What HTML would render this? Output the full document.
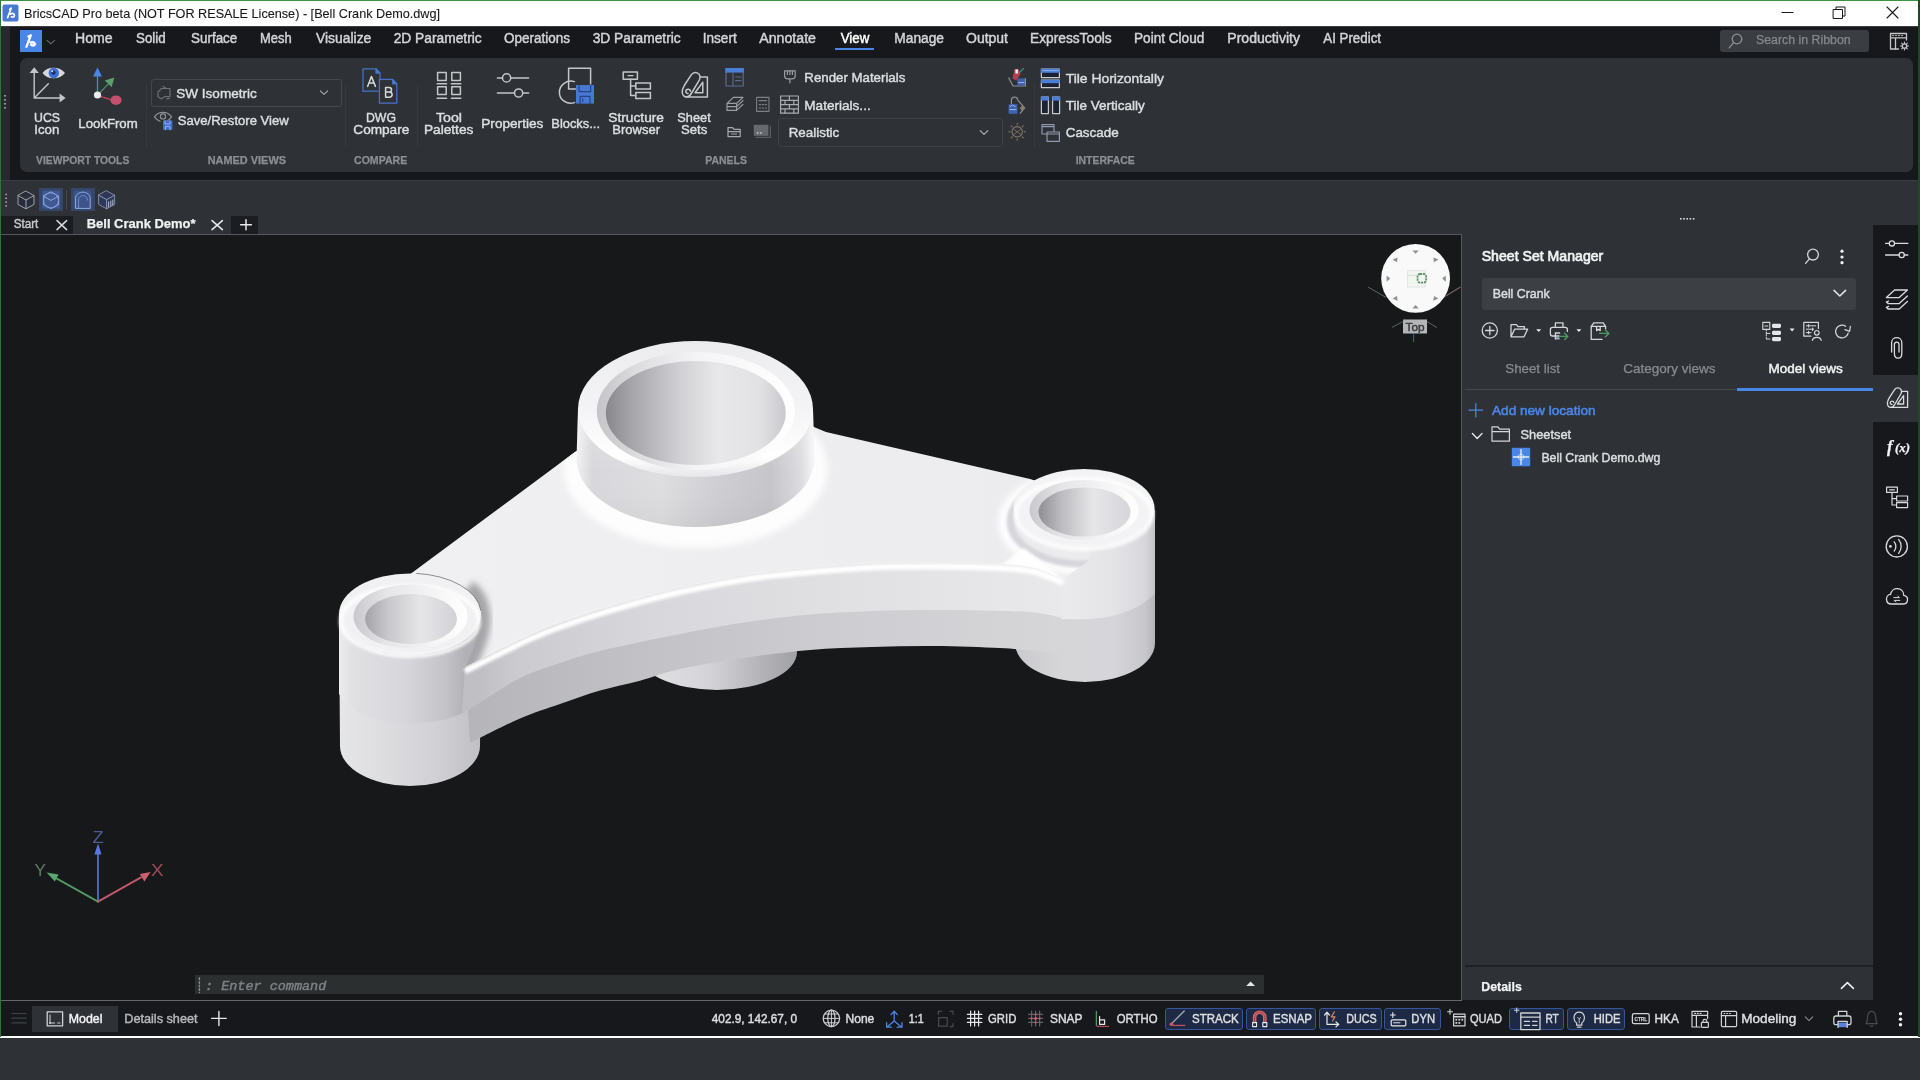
<!DOCTYPE html>
<html lang="en"><head><meta charset="utf-8"><title>BricsCAD Pro beta - Bell Crank Demo.dwg</title>
<style>
html,body{margin:0;padding:0;}
body{width:1920px;height:1080px;overflow:hidden;background:#2d3135;position:relative;font-family:"Liberation Sans", sans-serif;}
.b{position:absolute;}
svg#ov{position:absolute;left:0;top:0;width:1920px;height:1080px;font-family:"Liberation Sans", sans-serif;will-change:transform;}
svg#ov text{white-space:pre;}

</style></head><body>
<div class="b" style="left:0px;top:0px;width:1920px;height:1080px;background:#2e3236;"></div>
<div class="b" style="left:0px;top:0px;width:1920px;height:1px;background:#3f8f43;"></div>
<div class="b" style="left:1px;top:1px;width:1918px;height:25px;background:#ffffff;"></div>
<div class="b" style="left:0px;top:26px;width:1920px;height:154px;background:#17181b;"></div>
<div class="b" style="left:1px;top:26px;width:9px;height:154px;background:#26292d;"></div>
<div class="b" style="left:0px;top:26px;width:1920px;height:1px;background:#3b3e42;"></div>
<div class="b" style="left:20px;top:58px;width:1893px;height:114px;background:#2e3236;border-radius:7px;"></div>
<div class="b" style="left:0px;top:180px;width:1920px;height:1px;background:#3a3e42;"></div>
<div class="b" style="left:20px;top:30px;width:22px;height:22px;background:#4a86e8;"></div>
<div class="b" style="left:1720px;top:30px;width:149px;height:22px;background:#3a3e43;border-radius:3px;"></div>
<div class="b" style="left:1px;top:216px;width:72px;height:18px;background:#1b1d20;"></div>
<div class="b" style="left:231px;top:216px;width:27px;height:18px;background:#1b1d20;"></div>
<div class="b" style="left:0px;top:234px;width:1462px;height:767px;background:#54575b;"></div>
<div class="b" style="left:1px;top:235px;width:1460px;height:765px;background:#17181a;"></div>
<div class="b" style="left:1873px;top:225px;width:45px;height:776px;background:#17181b;"></div>
<div class="b" style="left:1873px;top:375px;width:45px;height:47px;background:#2e3236;"></div>
<div class="b" style="left:1465px;top:965px;width:408px;height:2px;background:#1f2124;"></div>
<div class="b" style="left:0px;top:1000px;width:1920px;height:37px;background:#17181b;"></div>
<div class="b" style="left:0px;top:1000px;width:1462px;height:1px;background:#63666a;"></div>
<div class="b" style="left:0px;top:1036px;width:1920px;height:2px;background:#ffffff;"></div>
<div class="b" style="left:0px;top:1038px;width:1920px;height:42px;background:#2e3236;"></div>
<div class="b" style="left:32px;top:1006px;width:86px;height:26px;background:#2e3236;"></div>
<div class="b" style="left:195px;top:975px;width:1069px;height:19px;background:#2b2f30;"></div>
<div class="b" style="left:0px;top:0px;width:1px;height:1037px;background:#2e7432;"></div>
<div class="b" style="left:1918px;top:0px;width:2px;height:1037px;background:#1d4a21;"></div>
<div class="b" style="left:1482px;top:278px;width:374px;height:32px;background:#3c4045;border-radius:3px;"></div>
<div class="b" style="left:1465px;top:389px;width:408px;height:1px;background:#45484d;"></div>
<div class="b" style="left:1737px;top:388px;width:136px;height:3px;background:#4a86e8;"></div>
<div class="b" style="left:151px;top:79px;width:189px;height:26px;border:1px solid #45494e;border-radius:3px;"></div>
<div class="b" style="left:778px;top:118px;width:223px;height:27px;border:1px solid #3d4146;border-radius:3px;"></div>
<div class="b" style="left:835px;top:48px;width:39px;height:2px;background:#4a86e8;"></div>
<div class="b" style="left:1165px;top:1008px;width:76px;height:20px;background:#1e2a45;border:1px solid #35569a;border-radius:3px;"></div>
<div class="b" style="left:1246px;top:1008px;width:68px;height:20px;background:#1e2a45;border:1px solid #35569a;border-radius:3px;"></div>
<div class="b" style="left:1319px;top:1008px;width:61px;height:20px;background:#1e2a45;border:1px solid #35569a;border-radius:3px;"></div>
<div class="b" style="left:1384px;top:1008px;width:55px;height:20px;background:#1e2a45;border:1px solid #35569a;border-radius:3px;"></div>
<div class="b" style="left:1509px;top:1008px;width:53px;height:20px;background:#1e2a45;border:1px solid #35569a;border-radius:3px;"></div>
<div class="b" style="left:1567px;top:1008px;width:56px;height:20px;background:#1e2a45;border:1px solid #35569a;border-radius:3px;"></div>
<div class="b" style="left:39px;top:188px;width:24px;height:23px;background:#36466a;"></div>
<div class="b" style="left:71px;top:188px;width:24px;height:23px;background:#36466a;"></div>
<div class="b" style="left:66px;top:190px;width:1px;height:19px;background:#45494e;"></div>
<div class="b" style="left:146px;top:84px;width:1px;height:63px;background:#363a3f;"></div>
<div class="b" style="left:345px;top:84px;width:1px;height:63px;background:#363a3f;"></div>
<div class="b" style="left:417px;top:84px;width:1px;height:63px;background:#363a3f;"></div>
<div class="b" style="left:1034px;top:84px;width:1px;height:63px;background:#363a3f;"></div>
<svg id="ov" viewBox="0 0 1920 1080" width="1920" height="1080">
<defs>
<linearGradient id="gBody" x1="578" x2="813" y1="0" y2="0" gradientUnits="userSpaceOnUse">
 <stop offset="0" stop-color="#efeff1"/><stop offset=".06" stop-color="#d8d8dc"/><stop offset=".35" stop-color="#dedee1"/>
 <stop offset=".6" stop-color="#cfcfd3"/><stop offset=".82" stop-color="#c6c6ca"/><stop offset=".95" stop-color="#dcdce0"/><stop offset="1" stop-color="#f4f4f6"/>
</linearGradient>
<linearGradient id="gBodyV" x1="0" x2="0" y1="409" y2="535" gradientUnits="userSpaceOnUse">
 <stop offset="0" stop-color="#fff" stop-opacity=".25"/><stop offset=".5" stop-color="#fff" stop-opacity="0"/><stop offset="1" stop-color="#000" stop-opacity=".06"/>
</linearGradient>
<linearGradient id="gHoleB" x1="606" x2="786" y1="0" y2="0" gradientUnits="userSpaceOnUse">
 <stop offset="0" stop-color="#88888c"/><stop offset=".12" stop-color="#a2a2a6"/><stop offset=".4" stop-color="#cfcfd3"/>
 <stop offset=".62" stop-color="#e8e8ea"/><stop offset=".85" stop-color="#e2e2e5"/><stop offset="1" stop-color="#c9c9cd"/>
</linearGradient>
<linearGradient id="gChamB" x1="596" x2="795" y1="0" y2="0" gradientUnits="userSpaceOnUse">
 <stop offset="0" stop-color="#c4c4c8"/><stop offset=".2" stop-color="#dcdcdf"/><stop offset=".5" stop-color="#f4f4f6"/><stop offset="1" stop-color="#ffffff"/>
</linearGradient>
<linearGradient id="gRimB" x1="0" x2="0" y1="341" y2="477" gradientUnits="userSpaceOnUse">
 <stop offset="0" stop-color="#ececee"/><stop offset=".5" stop-color="#f4f4f6"/><stop offset=".85" stop-color="#ffffff"/><stop offset="1" stop-color="#e6e6e9"/>
</linearGradient>
<linearGradient id="gTop" x1="420" x2="1060" y1="0" y2="0" gradientUnits="userSpaceOnUse">
 <stop offset="0" stop-color="#f0f0f2"/><stop offset=".5" stop-color="#eeeef0"/><stop offset="1" stop-color="#ececee"/>
</linearGradient>
<linearGradient id="gFaceU" x1="480" x2="1060" y1="0" y2="0" gradientUnits="userSpaceOnUse"><stop offset="0" stop-color="#c0c0c4"/><stop offset=".06" stop-color="#cbcbcf"/><stop offset=".3" stop-color="#d8d8dc"/><stop offset=".6" stop-color="#e0e0e3"/><stop offset="1" stop-color="#e9e9eb"/></linearGradient>
<linearGradient id="gFaceL" x1="480" x2="1060" y1="0" y2="0" gradientUnits="userSpaceOnUse"><stop offset="0" stop-color="#b6b6ba"/><stop offset=".3" stop-color="#c3c3c7"/><stop offset=".6" stop-color="#cdcdd1"/><stop offset="1" stop-color="#d6d6d9"/></linearGradient>
<linearGradient id="gLU" x1="339" x2="481" y1="0" y2="0" gradientUnits="userSpaceOnUse">
 <stop offset="0" stop-color="#ececee"/><stop offset=".1" stop-color="#e0e0e3"/><stop offset=".45" stop-color="#d8d8dc"/><stop offset=".75" stop-color="#c4c4c8"/><stop offset=".89" stop-color="#b2b2b6"/><stop offset="1" stop-color="#b0b0b4"/>
</linearGradient>
<linearGradient id="gLL" x1="339" x2="481" y1="0" y2="0" gradientUnits="userSpaceOnUse">
 <stop offset="0" stop-color="#e6e6e8"/><stop offset=".3" stop-color="#dedee1"/><stop offset=".7" stop-color="#d0d0d4"/><stop offset="1" stop-color="#c0c0c4"/>
</linearGradient>
<linearGradient id="gRU" x1="1014" x2="1155" y1="0" y2="0" gradientUnits="userSpaceOnUse">
 <stop offset="0" stop-color="#e8e8ea"/><stop offset=".35" stop-color="#ebebed"/><stop offset=".7" stop-color="#e4e4e7"/><stop offset=".93" stop-color="#d8d8dc"/><stop offset="1" stop-color="#c4c4c8"/>
</linearGradient>
<linearGradient id="gRL" x1="1014" x2="1155" y1="0" y2="0" gradientUnits="userSpaceOnUse">
 <stop offset="0" stop-color="#cacace"/><stop offset=".35" stop-color="#d6d6d9"/><stop offset=".7" stop-color="#d6d6da"/><stop offset=".93" stop-color="#c8c8cc"/><stop offset="1" stop-color="#b4b4b8"/>
</linearGradient>
<linearGradient id="gHoleL" x1="365" x2="457" y1="0" y2="0" gradientUnits="userSpaceOnUse">
 <stop offset="0" stop-color="#a4a4a8"/><stop offset=".25" stop-color="#c8c8cc"/><stop offset=".6" stop-color="#e6e6e9"/><stop offset="1" stop-color="#d2d2d6"/>
</linearGradient>
<linearGradient id="gHoleR" x1="1038" x2="1130" y1="0" y2="0" gradientUnits="userSpaceOnUse">
 <stop offset="0" stop-color="#8e8e92"/><stop offset=".25" stop-color="#bcbcc0"/><stop offset=".6" stop-color="#e6e6e9"/><stop offset="1" stop-color="#d6d6da"/>
</linearGradient>
<linearGradient id="gChamS" x1="0" x2="1" y1="0" y2="0">
 <stop offset="0" stop-color="#c9c9cd"/><stop offset=".3" stop-color="#e6e6e9"/><stop offset="1" stop-color="#ffffff"/>
</linearGradient>
<linearGradient id="gUnderB" x1="637" x2="800" y1="0" y2="0" gradientUnits="userSpaceOnUse">
 <stop offset="0" stop-color="#e2e2e5"/><stop offset=".45" stop-color="#d4d4d8"/><stop offset=".8" stop-color="#b0b0b4"/><stop offset="1" stop-color="#a0a0a4"/>
</linearGradient>
<filter id="soft" x="-30%" y="-30%" width="160%" height="160%"><feGaussianBlur stdDeviation="1.6"/></filter>
<filter id="soft3" x="-60%" y="-30%" width="220%" height="160%"><feGaussianBlur stdDeviation="3"/></filter>
<clipPath id="cpTop"><path d="M405,578 L575,452 L700,380 L826,432 L1030,479 L1090,500 L1090,560 L1063,579 C1058.3,577.2 1045.5,570.5 1035.0,568.0 C1024.5,565.5 1016.7,564.9 1000.0,564.0 C983.3,563.1 956.3,562.6 935.0,562.5 C913.7,562.4 892.8,562.6 872.0,563.5 C851.2,564.4 830.8,566.1 810.0,568.0 C789.2,569.9 768.7,571.7 747.0,575.0 C725.3,578.3 697.8,584.2 680.0,588.0 C662.2,591.8 653.3,594.4 640.0,598.0 C626.7,601.6 613.3,605.4 600.0,609.6 C586.7,613.8 571.7,618.8 560.0,623.0 C548.3,627.2 539.2,631.0 530.0,635.0 C520.8,639.0 513.2,643.0 505.0,647.0 C496.8,651.0 487.7,655.7 481.0,659.0 C474.3,662.3 467.7,665.7 465.0,667.0 L478,632 L480,615 L400,600 Z"/></clipPath>

</defs>
<text x="24.0" y="18.3" font-size="13" fill="#1a1a1a" textLength="416.0" lengthAdjust="spacingAndGlyphs" stroke="#1a1a1a" stroke-width="0.12">BricsCAD Pro beta (NOT FOR RESALE License) - [Bell Crank Demo.dwg]</text>
<text x="75.0" y="42.8" font-size="14" fill="#d2d4d6" textLength="37.6" lengthAdjust="spacingAndGlyphs" stroke="#d2d4d6" stroke-width="0.45">Home</text>
<text x="136.0" y="42.8" font-size="14" fill="#d2d4d6" textLength="29.7" lengthAdjust="spacingAndGlyphs" stroke="#d2d4d6" stroke-width="0.45">Solid</text>
<text x="191.0" y="42.8" font-size="14" fill="#d2d4d6" textLength="46.3" lengthAdjust="spacingAndGlyphs" stroke="#d2d4d6" stroke-width="0.45">Surface</text>
<text x="260.0" y="42.8" font-size="14" fill="#d2d4d6" textLength="31.7" lengthAdjust="spacingAndGlyphs" stroke="#d2d4d6" stroke-width="0.45">Mesh</text>
<text x="316.0" y="42.8" font-size="14" fill="#d2d4d6" textLength="55.3" lengthAdjust="spacingAndGlyphs" stroke="#d2d4d6" stroke-width="0.45">Visualize</text>
<text x="393.7" y="42.8" font-size="14" fill="#d2d4d6" textLength="88.0" lengthAdjust="spacingAndGlyphs" stroke="#d2d4d6" stroke-width="0.45">2D Parametric</text>
<text x="504.0" y="42.8" font-size="14" fill="#d2d4d6" textLength="66.0" lengthAdjust="spacingAndGlyphs" stroke="#d2d4d6" stroke-width="0.45">Operations</text>
<text x="592.7" y="42.8" font-size="14" fill="#d2d4d6" textLength="88.0" lengthAdjust="spacingAndGlyphs" stroke="#d2d4d6" stroke-width="0.45">3D Parametric</text>
<text x="702.7" y="42.8" font-size="14" fill="#d2d4d6" textLength="34.0" lengthAdjust="spacingAndGlyphs" stroke="#d2d4d6" stroke-width="0.45">Insert</text>
<text x="759.3" y="42.8" font-size="14" fill="#d2d4d6" textLength="56.7" lengthAdjust="spacingAndGlyphs" stroke="#d2d4d6" stroke-width="0.45">Annotate</text>
<text x="840.7" y="42.8" font-size="14" fill="#ffffff" textLength="28.6" lengthAdjust="spacingAndGlyphs" stroke="#ffffff" stroke-width="0.45">View</text>
<text x="894.3" y="42.8" font-size="14" fill="#d2d4d6" textLength="49.7" lengthAdjust="spacingAndGlyphs" stroke="#d2d4d6" stroke-width="0.45">Manage</text>
<text x="966.0" y="42.8" font-size="14" fill="#d2d4d6" textLength="42.0" lengthAdjust="spacingAndGlyphs" stroke="#d2d4d6" stroke-width="0.45">Output</text>
<text x="1030.0" y="42.8" font-size="14" fill="#d2d4d6" textLength="81.7" lengthAdjust="spacingAndGlyphs" stroke="#d2d4d6" stroke-width="0.45">ExpressTools</text>
<text x="1134.0" y="42.8" font-size="14" fill="#d2d4d6" textLength="70.3" lengthAdjust="spacingAndGlyphs" stroke="#d2d4d6" stroke-width="0.45">Point Cloud</text>
<text x="1227.3" y="42.8" font-size="14" fill="#d2d4d6" textLength="72.7" lengthAdjust="spacingAndGlyphs" stroke="#d2d4d6" stroke-width="0.45">Productivity</text>
<text x="1323.3" y="42.8" font-size="14" fill="#d2d4d6" textLength="57.7" lengthAdjust="spacingAndGlyphs" stroke="#d2d4d6" stroke-width="0.45">AI Predict</text>
<text x="1756.0" y="43.5" font-size="12.5" fill="#85898d" textLength="94.7" lengthAdjust="spacingAndGlyphs" stroke="#85898d" stroke-width="0.25">Search in Ribbon</text>
<text x="34.0" y="122.0" font-size="13.5" fill="#dcdee0" textLength="26.0" lengthAdjust="spacingAndGlyphs" stroke="#dcdee0" stroke-width="0.45">UCS</text>
<text x="34.3" y="134.3" font-size="13.5" fill="#dcdee0" textLength="25.0" lengthAdjust="spacingAndGlyphs" stroke="#dcdee0" stroke-width="0.45">Icon</text>
<text x="78.3" y="128.3" font-size="13.5" fill="#dcdee0" textLength="59.4" lengthAdjust="spacingAndGlyphs" stroke="#dcdee0" stroke-width="0.45">LookFrom</text>
<text x="176.3" y="97.7" font-size="13.5" fill="#dcdee0" textLength="80.4" lengthAdjust="spacingAndGlyphs" stroke="#dcdee0" stroke-width="0.45">SW Isometric</text>
<text x="177.7" y="125.0" font-size="13.5" fill="#dcdee0" textLength="111.0" lengthAdjust="spacingAndGlyphs" stroke="#dcdee0" stroke-width="0.45">Save/Restore View</text>
<text x="366.0" y="122.0" font-size="13.5" fill="#dcdee0" textLength="30.0" lengthAdjust="spacingAndGlyphs" stroke="#dcdee0" stroke-width="0.45">DWG</text>
<text x="353.3" y="134.3" font-size="13.5" fill="#dcdee0" textLength="56.0" lengthAdjust="spacingAndGlyphs" stroke="#dcdee0" stroke-width="0.45">Compare</text>
<text x="436.0" y="122.0" font-size="13.5" fill="#dcdee0" textLength="26.0" lengthAdjust="spacingAndGlyphs" stroke="#dcdee0" stroke-width="0.45">Tool</text>
<text x="424.0" y="134.3" font-size="13.5" fill="#dcdee0" textLength="49.3" lengthAdjust="spacingAndGlyphs" stroke="#dcdee0" stroke-width="0.45">Palettes</text>
<text x="481.3" y="128.3" font-size="13.5" fill="#dcdee0" textLength="62.0" lengthAdjust="spacingAndGlyphs" stroke="#dcdee0" stroke-width="0.45">Properties</text>
<text x="551.3" y="128.3" font-size="13.5" fill="#dcdee0" textLength="48.7" lengthAdjust="spacingAndGlyphs" stroke="#dcdee0" stroke-width="0.45">Blocks...</text>
<text x="608.3" y="122.0" font-size="13.5" fill="#dcdee0" textLength="55.7" lengthAdjust="spacingAndGlyphs" stroke="#dcdee0" stroke-width="0.45">Structure</text>
<text x="612.3" y="134.3" font-size="13.5" fill="#dcdee0" textLength="47.7" lengthAdjust="spacingAndGlyphs" stroke="#dcdee0" stroke-width="0.45">Browser</text>
<text x="677.3" y="122.0" font-size="13.5" fill="#dcdee0" textLength="33.4" lengthAdjust="spacingAndGlyphs" stroke="#dcdee0" stroke-width="0.45">Sheet</text>
<text x="681.0" y="134.3" font-size="13.5" fill="#dcdee0" textLength="26.3" lengthAdjust="spacingAndGlyphs" stroke="#dcdee0" stroke-width="0.45">Sets</text>
<text x="804.3" y="82.3" font-size="13.5" fill="#dcdee0" textLength="101.0" lengthAdjust="spacingAndGlyphs" stroke="#dcdee0" stroke-width="0.45">Render Materials</text>
<text x="804.3" y="109.7" font-size="13.5" fill="#dcdee0" textLength="66.4" lengthAdjust="spacingAndGlyphs" stroke="#dcdee0" stroke-width="0.45">Materials...</text>
<text x="788.7" y="136.7" font-size="13.5" fill="#dcdee0" textLength="50.6" lengthAdjust="spacingAndGlyphs" stroke="#dcdee0" stroke-width="0.45">Realistic</text>
<text x="1065.7" y="83.3" font-size="13.5" fill="#dcdee0" textLength="98.3" lengthAdjust="spacingAndGlyphs" stroke="#dcdee0" stroke-width="0.45">Tile Horizontally</text>
<text x="1065.7" y="110.0" font-size="13.5" fill="#dcdee0" textLength="79.0" lengthAdjust="spacingAndGlyphs" stroke="#dcdee0" stroke-width="0.45">Tile Vertically</text>
<text x="1065.7" y="137.0" font-size="13.5" fill="#dcdee0" textLength="53.0" lengthAdjust="spacingAndGlyphs" stroke="#dcdee0" stroke-width="0.45">Cascade</text>
<text x="36.0" y="164.2" font-size="11" fill="#8b8f93" textLength="93.3" lengthAdjust="spacingAndGlyphs" font-weight="700" stroke="#8b8f93" stroke-width="0.25">VIEWPORT TOOLS</text>
<text x="207.7" y="164.2" font-size="11" fill="#8b8f93" textLength="78.3" lengthAdjust="spacingAndGlyphs" font-weight="700" stroke="#8b8f93" stroke-width="0.25">NAMED VIEWS</text>
<text x="354.0" y="164.2" font-size="11" fill="#8b8f93" textLength="53.3" lengthAdjust="spacingAndGlyphs" font-weight="700" stroke="#8b8f93" stroke-width="0.25">COMPARE</text>
<text x="705.3" y="164.2" font-size="11" fill="#8b8f93" textLength="41.7" lengthAdjust="spacingAndGlyphs" font-weight="700" stroke="#8b8f93" stroke-width="0.25">PANELS</text>
<text x="1075.7" y="164.2" font-size="11" fill="#8b8f93" textLength="59.0" lengthAdjust="spacingAndGlyphs" font-weight="700" stroke="#8b8f93" stroke-width="0.25">INTERFACE</text>
<text x="13.7" y="228.4" font-size="13" fill="#c8cacc" textLength="24.6" lengthAdjust="spacingAndGlyphs" stroke="#c8cacc" stroke-width="0.45">Start</text>
<text x="86.7" y="228.4" font-size="13" fill="#f0f1f2" textLength="108.9" lengthAdjust="spacingAndGlyphs" font-weight="700" stroke="#f0f1f2" stroke-width="0.25">Bell Crank Demo*</text>
<text x="1481.7" y="261.2" font-size="15" fill="#f2f3f4" textLength="121.6" lengthAdjust="spacingAndGlyphs" stroke="#f2f3f4" stroke-width="0.7">Sheet Set Manager</text>
<text x="1492.8" y="298.4" font-size="13" fill="#dcdee0" textLength="56.9" lengthAdjust="spacingAndGlyphs" stroke="#dcdee0" stroke-width="0.45">Bell Crank</text>
<text x="1505.3" y="372.6" font-size="13" fill="#888c90" textLength="54.7" lengthAdjust="spacingAndGlyphs" stroke="#888c90" stroke-width="0.25">Sheet list</text>
<text x="1623.3" y="372.6" font-size="13" fill="#888c90" textLength="92.3" lengthAdjust="spacingAndGlyphs" stroke="#888c90" stroke-width="0.25">Category views</text>
<text x="1768.6" y="372.6" font-size="13" fill="#f2f3f4" textLength="74.2" lengthAdjust="spacingAndGlyphs" stroke="#f2f3f4" stroke-width="0.45">Model views</text>
<text x="1492.0" y="415.2" font-size="13" fill="#4a86e8" textLength="103.6" lengthAdjust="spacingAndGlyphs" stroke="#4a86e8" stroke-width="0.55">Add new location</text>
<text x="1520.6" y="438.8" font-size="13" fill="#dcdee0" textLength="50.5" lengthAdjust="spacingAndGlyphs" stroke="#dcdee0" stroke-width="0.45">Sheetset</text>
<text x="1541.4" y="461.6" font-size="13" fill="#dcdee0" textLength="118.9" lengthAdjust="spacingAndGlyphs" stroke="#dcdee0" stroke-width="0.45">Bell Crank Demo.dwg</text>
<text x="1481.3" y="991.2" font-size="13.5" fill="#f2f3f4" textLength="40.5" lengthAdjust="spacingAndGlyphs" font-weight="700" stroke="#f2f3f4" stroke-width="0.25">Details</text>
<text x="68.8" y="1023.2" font-size="13" fill="#f2f3f4" textLength="33.7" lengthAdjust="spacingAndGlyphs" stroke="#f2f3f4" stroke-width="0.45">Model</text>
<text x="124.3" y="1023.2" font-size="13" fill="#b4b7ba" textLength="73.2" lengthAdjust="spacingAndGlyphs" stroke="#b4b7ba" stroke-width="0.45">Details sheet</text>
<text x="205.0" y="990.3" font-size="13" fill="#7c8084" textLength="121.3" lengthAdjust="spacingAndGlyphs" font-style="italic" font-family='"Liberation Mono", monospace' stroke="#7c8084" stroke-width="0.45">: Enter command</text>
<text x="711.8" y="1022.6" font-size="12.5" fill="#dcdee0" textLength="85.2" lengthAdjust="spacingAndGlyphs" stroke="#dcdee0" stroke-width="0.45">402.9, 142.67, 0</text>
<text x="845.5" y="1023.2" font-size="12.5" fill="#dcdee0" textLength="28.8" lengthAdjust="spacingAndGlyphs" stroke="#dcdee0" stroke-width="0.45">None</text>
<text x="908.8" y="1023.2" font-size="12.5" fill="#dcdee0" textLength="15.0" lengthAdjust="spacingAndGlyphs" stroke="#dcdee0" stroke-width="0.45">1:1</text>
<text x="988.0" y="1023.2" font-size="12.5" fill="#dcdee0" textLength="28.3" lengthAdjust="spacingAndGlyphs" stroke="#dcdee0" stroke-width="0.45">GRID</text>
<text x="1050.0" y="1023.2" font-size="12.5" fill="#dcdee0" textLength="32.5" lengthAdjust="spacingAndGlyphs" stroke="#dcdee0" stroke-width="0.45">SNAP</text>
<text x="1116.8" y="1023.2" font-size="12.5" fill="#dcdee0" textLength="40.7" lengthAdjust="spacingAndGlyphs" stroke="#dcdee0" stroke-width="0.45">ORTHO</text>
<text x="1192.0" y="1023.2" font-size="12.5" fill="#dcdee0" textLength="46.8" lengthAdjust="spacingAndGlyphs" stroke="#dcdee0" stroke-width="0.45">STRACK</text>
<text x="1273.0" y="1023.2" font-size="12.5" fill="#dcdee0" textLength="39.0" lengthAdjust="spacingAndGlyphs" stroke="#dcdee0" stroke-width="0.45">ESNAP</text>
<text x="1346.3" y="1023.2" font-size="12.5" fill="#dcdee0" textLength="30.5" lengthAdjust="spacingAndGlyphs" stroke="#dcdee0" stroke-width="0.45">DUCS</text>
<text x="1411.3" y="1023.2" font-size="12.5" fill="#dcdee0" textLength="23.7" lengthAdjust="spacingAndGlyphs" stroke="#dcdee0" stroke-width="0.45">DYN</text>
<text x="1470.0" y="1023.2" font-size="12.5" fill="#dcdee0" textLength="32.0" lengthAdjust="spacingAndGlyphs" stroke="#dcdee0" stroke-width="0.45">QUAD</text>
<text x="1545.5" y="1023.2" font-size="12.5" fill="#dcdee0" textLength="13.3" lengthAdjust="spacingAndGlyphs" stroke="#dcdee0" stroke-width="0.45">RT</text>
<text x="1593.8" y="1023.2" font-size="12.5" fill="#dcdee0" textLength="26.7" lengthAdjust="spacingAndGlyphs" stroke="#dcdee0" stroke-width="0.45">HIDE</text>
<text x="1654.5" y="1023.2" font-size="12.5" fill="#dcdee0" textLength="24.3" lengthAdjust="spacingAndGlyphs" stroke="#dcdee0" stroke-width="0.45">HKA</text>
<text x="1741.3" y="1023.2" font-size="13" fill="#dcdee0" textLength="55.0" lengthAdjust="spacingAndGlyphs" stroke="#dcdee0" stroke-width="0.45">Modeling</text>
<rect x="1403" y="319.5" width="24" height="14" fill="#b4b5b7"/>
<text x="1405.5" y="331.0" font-size="11.5" fill="#3a3c3e" textLength="19.0" lengthAdjust="spacingAndGlyphs" stroke="#3a3c3e" stroke-width="0.45">Top</text>
<text x="1887.0" y="451.6" font-size="17" fill="#f2f3f4" font-weight="700" font-style="italic" font-family='"Liberation Serif", serif' stroke="#f2f3f4" stroke-width="0.25">f</text>
<text x="1895.0" y="451.6" font-size="11.5" fill="#f2f3f4" textLength="15.0" lengthAdjust="spacingAndGlyphs" font-weight="700" font-style="italic" font-family='"Liberation Serif", serif' stroke="#f2f3f4" stroke-width="0.25">(x)</text>
<text x="92.4" y="842.6" font-size="17" fill="#4a5c94" textLength="11.2" lengthAdjust="spacingAndGlyphs">Z</text>
<text x="34.6" y="875.6" font-size="17" fill="#5c7a66" textLength="11.4" lengthAdjust="spacingAndGlyphs">Y</text>
<text x="151.0" y="875.6" font-size="17" fill="#a04c58" textLength="12.6" lengthAdjust="spacingAndGlyphs">X</text>
<text x="1634.6" y="1021.2" font-size="6" fill="#d0d2d4" textLength="12.4" lengthAdjust="spacingAndGlyphs" font-weight="700" stroke="#d0d2d4" stroke-width="0.25">CTRL</text>
<g id="model">
<!-- underside of big boss -->
<path d="M637,640 L637,652 A80,38 0 0 0 797,652 L797,630 Z" fill="url(#gUnderB)"/>
<!-- right boss cylinder -->
<path d="M1014,510 L1015,643 A70,39 0 0 0 1155,643 L1155,510 Z" fill="url(#gRL)"/>
<path d="M1014,510 L1014,612 C1040,618 1062,620 1090,619 C1120,617 1140,608 1155,594 L1155,510 Z" fill="url(#gRU)"/>
<!-- left boss cylinder -->
<path d="M339,614 L340,746 A70,40 0 0 0 480,746 L481,614 Z" fill="url(#gLL)"/>
<path d="M339,614 L339,694 C352,712 375,722 400,723 C430,724 448,720 463,713 L481,614 Z" fill="url(#gLU)"/>
<!-- plate front face -->
<path d="M465,665.5 C467.7,664.2 474.3,660.8 481.0,657.5 C487.7,654.2 496.8,649.5 505.0,645.5 C513.2,641.5 520.8,637.5 530.0,633.5 C539.2,629.5 548.3,625.7 560.0,621.5 C571.7,617.3 586.7,612.3 600.0,608.1 C613.3,603.9 626.7,600.1 640.0,596.5 C653.3,592.9 662.2,590.3 680.0,586.5 C697.8,582.7 725.3,576.8 747.0,573.5 C768.7,570.2 789.2,568.4 810.0,566.5 C830.8,564.6 851.2,562.9 872.0,562.0 C892.8,561.1 913.7,560.9 935.0,561.0 C956.3,561.1 983.3,561.6 1000.0,562.5 C1016.7,563.4 1024.5,564.0 1035.0,566.5 C1045.5,569.0 1058.3,575.7 1063.0,577.5 L1059,653 C1055.0,652.7 1044.8,651.8 1035.0,651.0 C1025.2,650.2 1016.7,648.8 1000.0,648.0 C983.3,647.2 956.3,646.2 935.0,646.0 C913.7,645.8 892.8,646.3 872.0,647.0 C851.2,647.7 830.8,648.2 810.0,650.0 C789.2,651.8 768.7,654.3 747.0,657.5 C725.3,660.7 697.8,665.1 680.0,669.0 C662.2,672.9 653.3,677.1 640.0,680.7 C626.7,684.3 613.3,686.6 600.0,690.5 C586.7,694.4 573.3,699.3 560.0,704.0 C546.7,708.7 535.0,712.0 520.0,718.5 C505.0,725.0 478.3,738.9 470.0,743.0 Z" fill="url(#gFaceL)"/>
<path d="M465,665.5 C467.7,664.2 474.3,660.8 481.0,657.5 C487.7,654.2 496.8,649.5 505.0,645.5 C513.2,641.5 520.8,637.5 530.0,633.5 C539.2,629.5 548.3,625.7 560.0,621.5 C571.7,617.3 586.7,612.3 600.0,608.1 C613.3,603.9 626.7,600.1 640.0,596.5 C653.3,592.9 662.2,590.3 680.0,586.5 C697.8,582.7 725.3,576.8 747.0,573.5 C768.7,570.2 789.2,568.4 810.0,566.5 C830.8,564.6 851.2,562.9 872.0,562.0 C892.8,561.1 913.7,560.9 935.0,561.0 C956.3,561.1 983.3,561.6 1000.0,562.5 C1016.7,563.4 1024.5,564.0 1035.0,566.5 C1045.5,569.0 1058.3,575.7 1063.0,577.5 L1063,618 C1058.3,617.1 1045.5,613.7 1035.0,612.5 C1024.5,611.3 1016.7,611.4 1000.0,611.0 C983.3,610.6 956.3,610.0 935.0,610.0 C913.7,610.0 892.8,610.2 872.0,611.0 C851.2,611.8 830.8,612.7 810.0,614.5 C789.2,616.3 768.7,618.8 747.0,622.0 C725.3,625.2 704.5,629.2 680.0,634.0 C655.5,638.8 620.0,646.2 600.0,651.0 C580.0,655.8 573.3,658.5 560.0,663.0 C546.7,667.5 533.2,671.5 520.0,678.0 C506.8,684.5 490.7,696.0 481.0,702.0 C471.3,708.0 465.2,712.0 462.0,714.0 Z" fill="url(#gFaceU)"/>
<!-- plate top surface -->
<path d="M405,578 L575,452 L700,380 L826,432 L1030,479 L1090,500 L1090,560 L1063,579 C1058.3,577.2 1045.5,570.5 1035.0,568.0 C1024.5,565.5 1016.7,564.9 1000.0,564.0 C983.3,563.1 956.3,562.6 935.0,562.5 C913.7,562.4 892.8,562.6 872.0,563.5 C851.2,564.4 830.8,566.1 810.0,568.0 C789.2,569.9 768.7,571.7 747.0,575.0 C725.3,578.3 697.8,584.2 680.0,588.0 C662.2,591.8 653.3,594.4 640.0,598.0 C626.7,601.6 613.3,605.4 600.0,609.6 C586.7,613.8 571.7,618.8 560.0,623.0 C548.3,627.2 539.2,631.0 530.0,635.0 C520.8,639.0 513.2,643.0 505.0,647.0 C496.8,651.0 487.7,655.7 481.0,659.0 C474.3,662.3 467.7,665.7 465.0,667.0 L478,632 L480,615 L400,600 Z" fill="url(#gTop)"/>
<!-- front edge fillet highlight -->
<path d="M465,671 C467.7,669.7 474.3,666.3 481.0,663.0 C487.7,659.7 496.8,655.0 505.0,651.0 C513.2,647.0 520.8,643.0 530.0,639.0 C539.2,635.0 548.3,631.2 560.0,627.0 C571.7,622.8 586.7,617.8 600.0,613.6 C613.3,609.4 626.7,605.6 640.0,602.0 C653.3,598.4 662.2,595.8 680.0,592.0 C697.8,588.2 725.3,582.3 747.0,579.0 C768.7,575.7 789.2,573.9 810.0,572.0 C830.8,570.1 851.2,568.4 872.0,567.5 C892.8,566.6 913.7,566.4 935.0,566.5 C956.3,566.6 983.3,567.1 1000.0,568.0 C1016.7,568.9 1024.5,569.5 1035.0,572.0 C1045.5,574.5 1058.3,581.2 1063.0,583.0 " fill="none" stroke="#ffffff" stroke-width="6" filter="url(#soft)"/>
<g clip-path="url(#cpTop)">
 <!-- big boss base fillet -->
 <ellipse cx="695.5" cy="469" rx="132" ry="79" fill="#fdfdfd" filter="url(#soft3)"/>
 <!-- right boss base fillet -->
 <ellipse cx="1084" cy="522" rx="81" ry="48" fill="none" stroke="#ffffff" stroke-width="9" filter="url(#soft3)"/>
 <ellipse cx="1084" cy="521" rx="73.5" ry="43" fill="none" stroke="#d6d6da" stroke-width="7" filter="url(#soft)"/>
 <path d="M1000,566 L1062,578.5 L1024,548 Z" fill="#ffffff" filter="url(#soft)" opacity=".9"/>
 <!-- left boss shadow on plate -->
 <path d="M468,588 C484,600 484,622 479,638 C475,650 471,660 465,669" fill="none" stroke="#98989c" stroke-width="17" filter="url(#soft3)" opacity=".85"/>
</g>
<!-- left boss upper lateral bit above plate -->
<path d="M481,614 L480,618 C478,636 472,654 465,668 L455,668 L455,614 Z" fill="url(#gLU)"/>
<!-- big boss body -->
<path d="M578,409 L576.5,459 A119,68 0 0 0 814.5,459 L813,409 Z" fill="url(#gBody)"/>
<path d="M578,409 L576.5,459 A119,68 0 0 0 814.5,459 L813,409 Z" fill="url(#gBodyV)"/>
<!-- big boss top -->
<ellipse cx="695.5" cy="409" rx="117.5" ry="68" fill="url(#gRimB)"/>
<ellipse cx="695.8" cy="411" rx="99" ry="59" fill="url(#gChamB)"/>
<ellipse cx="695.8" cy="413" rx="90" ry="52" fill="url(#gHoleB)"/>
<!-- left boss top -->

<ellipse cx="410" cy="614" rx="71" ry="40.5" fill="#f1f1f3"/>
<path d="M416.2,573.4 A71,40.5 0 0 1 480.8,610.5" fill="none" stroke="#58585c" stroke-width="1" opacity=".65"/>
<ellipse cx="410" cy="621" rx="69" ry="35" fill="none" stroke="#ffffff" stroke-width="4" filter="url(#soft)" opacity=".9"/>
<ellipse cx="410.5" cy="616.5" rx="57" ry="32" fill="url(#gChamS)"/>
<ellipse cx="411" cy="619" rx="46" ry="25" fill="url(#gHoleL)"/>
<!-- right boss top -->
<ellipse cx="1084" cy="508.5" rx="70.5" ry="39.5" fill="#f3f3f5"/>
<ellipse cx="1084" cy="514" rx="68" ry="35" fill="none" stroke="#ffffff" stroke-width="4" filter="url(#soft)" opacity=".9"/>
<ellipse cx="1084" cy="510" rx="54.5" ry="30" fill="url(#gChamS)"/>
<ellipse cx="1084.5" cy="512" rx="46" ry="24.5" fill="url(#gHoleR)"/>
</g>
<g id="viewcube">
<path d="M1368,287 L1386,297.4 M1460,287 L1444,297 M1392,327.4 L1404,321 M1437,327.6 L1427,321.6" stroke="#6c7a72" stroke-width="1" fill="none" opacity=".8"/>
<path d="M1446,296 L1461,287" stroke="#8a5e62" stroke-width="1" opacity=".8"/>
<path d="M1413.6,334 V342" stroke="#3f4fa0" stroke-width="1.2"/>
<circle cx="1415.6" cy="278.4" r="34.4" fill="#f9f9fa"/>
<g fill="#8e8f92">
<path d="M1412.4,250.4 h6.4 l-3.2,3.4 z"/><path d="M1412.4,308.4 h6.4 l-3.2,-3.4 z"/>
<path d="M1386.6,275.4 v6.4 l3.6,-3.2 z"/><path d="M1445.8,275.4 v6.4 l-3.6,-3.2 z"/>
<path d="M1392.6,259.6 l5,-2.2 l-.6,4.8 z"/><path d="M1438.4,259.6 l-5,-2.2 l.6,4.8 z"/>
<path d="M1392.6,298.6 l5,2.2 l-.6,-4.8 z"/><path d="M1438.4,298.6 l-5,2.2 l.6,-4.8 z"/>
</g>
<rect x="1407.6" y="270.6" width="17.6" height="16.4" fill="#f2f6f0" stroke="#e2e4e2" stroke-width="1"/>
<path d="M1407.6,275.4 H1417" stroke="#dcdedc" stroke-width="1"/>
<rect x="1417.6" y="274" width="8.6" height="8.6" rx="2.4" fill="none" stroke="#5e936c" stroke-width="1.8" stroke-dasharray="2.2 .8"/>
</g>

<g id="ucs" fill="none" stroke-linecap="round">
<path d="M98,901.6 V852" stroke="#4f6fd0" stroke-width="1.8"/>
<path d="M98,843.4 L101.6,854.6 H94.4 Z" fill="#5878dc"/>
<path d="M98,901.6 L54.6,877.4" stroke="#4e9a62" stroke-width="1.8"/>
<path d="M46.6,872.4 L58.6,874.6 L54.8,881.4 Z" fill="#5aa66e"/>
<path d="M98,901.6 L141,877.4" stroke="#c25a6c" stroke-width="1.8"/>
<path d="M150.6,872 L144.4,881.6 L139.8,874 Z" fill="#c9606f"/>
</g>

<g id="icons-top" fill="none" stroke-linecap="round" stroke-linejoin="round">
<!-- title bar app icon -->
<rect x="2.5" y="4.5" width="16" height="17" rx="2" fill="#4878cf" stroke="none"/>
<path d="M11.2,8.2 L7.6,17.6 M9.6,9.4 L11.2,8.2 M10.6,14.2 C12,12.8 14.6,13.4 14.4,15.6 C14.3,17 12.6,17.4 11.4,16.8" stroke="#fff" stroke-width="1.7"/>
<!-- app button glyph -->
<path d="M30.8,35.4 L26.4,46.8 M28.4,36.6 L30.8,35.4" stroke="#fff" stroke-width="2.3"/><path d="M29.6,42 C32.4,40.2 36.2,42 35.8,44.6 C35.4,46.6 32.4,46.6 30.2,45.4 L31.2,43.6 C32.4,44.4 33.4,44.2 33.4,43.6 C33.4,43 32,42.8 30.6,43.4 Z" fill="#fff" stroke="#fff" stroke-width=".8"/>
<path d="M47,40.4 L50.8,43.8 L54.6,40.4" stroke="#5f6368" stroke-width="1.2"/>
<!-- window controls -->
<path d="M1782,12.5 H1793" stroke="#1a1a1a" stroke-width="1"/>
<path d="M1833.5,9.5 h9 v9 h-9 z M1836,9.5 v-2.5 h9 v9 h-2.5" stroke="#1a1a1a" stroke-width="1"/>
<path d="M1887,7 L1898,18 M1898,7 L1887,18" stroke="#1a1a1a" stroke-width="1.1"/>
<!-- search icon -->
<circle cx="1737" cy="39" r="4.8" stroke="#8c9094" stroke-width="1.3"/>
<path d="M1733.6,42.6 L1729.2,47.8" stroke="#8c9094" stroke-width="1.3"/>
<!-- ribbon settings icon -->
<g stroke="#c4c6c8" stroke-width="1.3">
<path d="M1906.5,40 V33.5 h-16 v15.5 h8"/>
<path d="M1890.5,37.8 h16 M1895.5,37.8 V49"/>
<path d="M1892.5,35.6 h1 M1895.5,35.6 h1 M1898.5,35.6 h1 M1901.5,35.6 h1" stroke-width="1"/>
<circle cx="1904.5" cy="46" r="2.2"/>
<path d="M1904.5,42 v1.2 M1904.5,48.8 v1.2 M1900.5,46 h1.2 M1907.3,46 h1.2 M1901.7,43.2 l.9,.9 M1906.4,47.9 l.9,.9 M1907.3,43.2 l-.9,.9 M1902.6,47.9 l-.9,.9" stroke-width="1.1"/>
</g>
<!-- left strip gripper (ribbon) -->
<g fill="#aeb0b3" stroke="none">
<rect x="4.2" y="95" width="1.6" height="1.6"/><rect x="4.2" y="99" width="1.6" height="1.6"/><rect x="4.2" y="103" width="1.6" height="1.6"/><rect x="4.2" y="107" width="1.6" height="1.6"/>
<rect x="5.4" y="193.7" width="1.5" height="1.5"/><rect x="5.4" y="197.5" width="1.5" height="1.5"/><rect x="5.4" y="201.3" width="1.5" height="1.5"/><rect x="5.4" y="205.1" width="1.5" height="1.5"/>
</g>
<!-- toolbar row icons -->
<g stroke-width="1">
<path d="M26,191.2 L34,195.6 V204.4 L26,208.8 L18,204.4 V195.6 Z M18,195.6 L26,200 L34,195.6 M26,200 V208.8" stroke="#9ea2aa" fill="#272c3c"/>
<rect x="42.3" y="190.6" width="17.8" height="18" fill="#4766aa" stroke="none" opacity=".6"/>
<path d="M51,192 L58.6,196.2 V204.6 L51,208.6 L43.6,204.6 V196.2 Z M43.6,196.2 L51,200.4 L58.6,196.2" stroke="#8fa9e3"/>
<circle cx="51" cy="200.4" r="7.6" stroke="#7f9bdb" stroke-width="1"/>
<rect x="73.6" y="190.6" width="17.8" height="18" fill="#4260a2" stroke="none" opacity=".55"/>
<path d="M75.6,208 V198.6 C75.6,190 90.2,190 90.2,198.6 V208 Z" stroke="#8fa9e3"/>
<path d="M78.6,208 V200 C78.6,194 87.4,194 87.4,200" stroke="#6f8bd0" stroke-width="1"/>
<path d="M106.6,190.8 L114.6,195.2 V204.4 L106.6,208.8 L98.6,204.4 V195.2 Z" stroke="#7f88a8" fill="#2f3858"/>
<path d="M98.6,195.2 L106.6,199.6 L114.6,195.2 M106.6,199.6 V208.8" stroke="#8e96b4" stroke-width="1"/>
<path d="M108.6,202 v5 M110.8,201 v5 M112.8,200 v5" stroke="#c4c8d8" stroke-width=".9"/>
</g>
<!-- doc tab close / plus -->
<path d="M57,220.6 L66.6,229.6 M66.6,220.6 L57,229.6" stroke="#d4d6d8" stroke-width="1.5"/>
<path d="M212,220.6 L222.4,229.6 M222.4,220.6 L212,229.6" stroke="#e8eaec" stroke-width="1.5"/>
<path d="M240.6,224.8 H251.4 M246,219.8 V229.8" stroke="#e8eaec" stroke-width="1.5"/>
<!-- panel gripper dots -->
<g fill="#d8dadc" stroke="none"><rect x="1680" y="218" width="1.6" height="1.6"/><rect x="1683.2" y="218" width="1.6" height="1.6"/><rect x="1686.4" y="218" width="1.6" height="1.6"/><rect x="1689.6" y="218" width="1.6" height="1.6"/><rect x="1692.8" y="218" width="1.6" height="1.6"/></g>
</g>

<g id="icons-ribbon" fill="none" stroke-linecap="round" stroke-linejoin="round" stroke="#c4c6c8" stroke-width="1.4">
<!-- UCS icon -->
<path d="M34.2,71 V98 H61 M34.2,98 L48.3,83.8"/>
<path d="M34.2,67.2 L38.8,73 H29.6 Z M65.6,98 L59.6,102.6 V93.4 Z" fill="#c4c6c8" stroke="none"/>
<path d="M42.5,73 C47,66 60,66 65,73 C60,80 47,80 42.5,73 Z" fill="#d6d8da" stroke="none"/>
<circle cx="53.8" cy="73" r="5.2" fill="#3b6fd2" stroke="none"/><circle cx="53.4" cy="72.6" r="2.2" fill="#1c2f66" stroke="none"/><circle cx="52.2" cy="71.2" r="1" fill="#cfe0ff" stroke="none"/>
<!-- LookFrom -->
<path d="M97.5,76 V91.5" stroke="#4a86e8" stroke-width="1.3"/>
<path d="M97.5,67.6 L102,76.4 H93 Z" fill="#4a86e8" stroke="none"/>
<path d="M99.6,92.8 L108,84.4" stroke="#4f9a62" stroke-width="1.2"/>
<path d="M114.4,77.6 L111.6,87.2 L104.8,80.6 Z" fill="#5aa06e" stroke="none"/>
<path d="M101,96.6 L110,99.4" stroke="#b8455e" stroke-width="1.6" stroke-dasharray="1.4 1.6"/>
<ellipse cx="116" cy="100.2" rx="5.6" ry="4.8" fill="#c4506b" stroke="none"/>
<circle cx="97.5" cy="95" r="3.6" fill="#ececee" stroke="none"/>
<!-- SW Isometric small icon -->
<g stroke="#6d7176" stroke-width="1.2">
<path d="M161.5,88.5 h8.5 v8 h-5"/><path d="M158,92 l3.5,-3.5 M158,92 v4.5 l3,2.4 l4,-2.4"/><path d="M163,86.5 l2.4,1.2 M169.5,98.3 l-2.8,.4"/>
</g>
<!-- Save/Restore view -->
<path d="M154.4,116.8 C158.4,110.8 167.6,110.8 171.6,116.8 C170.4,118.6 168.8,120 167,120.8 M154.4,116.8 C155.8,118.8 157.6,120.4 160,121.2" stroke="#8c9094" stroke-width="1.2"/>
<circle cx="163" cy="116.4" r="2.6" stroke="#8c9094" stroke-width="1.2"/>
<rect x="163" y="120.6" width="9.4" height="9.2" fill="#3f6fd0" stroke="none"/>
<path d="M165,120.6 v3.4 h5 v-3.4 M165.4,129.8 v-3.2 h4.6 v3.2" stroke="#9db7ee" stroke-width=".9"/>
<!-- dropdown chevrons -->
<path d="M320.4,91 L324,94.4 L327.6,91" stroke="#9a9ea2" stroke-width="1.2"/>
<path d="M980.2,130.6 L984,134.4 L987.8,130.6" stroke="#a4a8ac" stroke-width="1.3"/>
<!-- DWG compare -->
<g stroke="#4474c8" stroke-width="1.25">
<path d="M363,91.2 V68.8 H376 L380,73 V80"/><path d="M376,68.8 V73 H380" fill="#4a7fd6"/>
<path d="M379.4,103 V79.4 H392.6 L396.8,83.8 V103 Z"/><path d="M392.6,79.4 V83.8 H396.8" fill="#4a7fd6"/>
<path d="M363,91.2 H378"/>
</g>
<path d="M367.6,86.4 L371.4,76.4 L375.4,86.4 M369,83 H374" stroke="#d6d8da" stroke-width="1.5"/>
<path d="M385.6,97.2 V87.4 H389 C392.4,87.4 392.4,92 389,92 H385.6 M389,92 C393.2,92 393.2,97.2 389,97.2 H385.6" stroke="#d6d8da" stroke-width="1.5"/>
<!-- Tool palettes -->
<g stroke-width="1.5">
<rect x="437.6" y="72.6" width="8.6" height="7.8"/><rect x="451.8" y="72.6" width="8.6" height="7.8"/>
<rect x="437.6" y="86.8" width="8.6" height="7.8"/><rect x="451.8" y="86.8" width="8.6" height="7.8"/>
<path d="M437.2,83.8 H446.6 M451.4,83.8 H460.8 M437.2,98.2 H446.6 M451.4,98.2 H460.8"/>
</g>
<!-- Properties -->
<g stroke-width="1.5">
<path d="M497.4,77.9 H502.4 M510.8,77.9 H528.6 M497.4,93 H514.4 M522.8,93 H528.6"/>
<circle cx="506.6" cy="77.9" r="4.1"/><circle cx="518.6" cy="93" r="4.1"/>
</g>
<!-- Blocks -->
<g stroke-width="1.5">
<path d="M575.4,89 H568.6 V68.2 H590.6 V84"/>
<path d="M574.4,81.6 C567,79.6 559.4,84.6 559.4,92.4 C559.4,99.8 566.8,105 574.6,102.6"/>
</g>
<rect x="576" y="85" width="18" height="18.6" fill="#4678d6" stroke="none"/>
<path d="M579,85.4 v6.2 h11.6 v-6.2 M580,103.4 v-7 h10 v7 M582.6,98.8 v2.6" stroke="#2a437e" stroke-width="1.2"/>
<!-- Structure browser -->
<g stroke-width="1.5">
<rect x="623.2" y="72" width="14.2" height="7.2"/><path d="M628,75.6 H633" stroke-width="1.2"/>
<path d="M630.6,79.2 V95.4 H635.6 M630.6,86 H635.6"/>
<rect x="635.8" y="83" width="14.6" height="6"/><rect x="635.8" y="92.4" width="14.6" height="6"/>
</g>
<!-- Sheet sets (big) -->
<g stroke-width="1.5">
<path d="M682.2,91.6 C682.2,89 683.2,87.4 684.6,85 L691.4,74.6 C693.4,71.6 697.6,71.8 699.4,74.6 C700.6,76.6 700.4,78 699.4,79.8 L691.6,93 C690.2,95.4 688.6,97 686.6,97 C684,97 682.2,94.6 682.2,91.6 Z"/>
<path d="M686.6,97 H707.4 V77 H700.6"/>
<path d="M690.4,91.2 C690.4,88.4 685.8,88.6 685.8,91.4 C685.8,92.8 687,93.6 688,93.4"/>
<path d="M702.8,82.2 V92.8 H695 Z"/>
</g>
<!-- panel small icons -->
<rect x="726" y="68.6" width="17.2" height="17.4" stroke="#5c6a90" stroke-width="1.2"/>
<rect x="725.4" y="68" width="18.4" height="4.6" fill="#4a7fd8" stroke="none"/>
<path d="M733,73 V86 M735.6,77 H741 M735.6,80.6 H741" stroke="#5c6a90" stroke-width="1.1"/>
<g stroke="#9a9ea2" stroke-width="1.2">
<path d="M727,103.4 L733.4,97.4 H743 L736.6,103.4 Z M727,103.4 V106.6 H736.6 L743,100.6 M727,106.6 V110.4 H736.6 L743,104.4 M736.6,103.4 V110.4"/>
</g>
<path d="M728,136.6 V127.6 H732.6 L734,129.4 H740.2 V136.6 Z M728,131.6 H740.2 M731.6,134 H736.6" stroke="#a8acb0" stroke-width="1.2"/>
<g stroke="#7c8084" stroke-width="1.1">
<rect x="756.6" y="97.4" width="12.4" height="14"/><path d="M759,100.6 H766.6 M759.2,104.6 h1.4 M762.2,104.6 h1.4 M765.2,104.6 h1.4 M759.2,108 h1.4 M762.2,108 h1.4 M765.2,108 h1.4"/>
</g>
<rect x="753.8" y="124.8" width="14.6" height="11" fill="#666a6f" stroke="none"/><path d="M770.4,126.4 V137.4 H756" stroke="#5a5e63" stroke-width="1.2"/>
<circle cx="757.6" cy="133" r="1" fill="#b4b8bc" stroke="none"/><circle cx="760.8" cy="133" r="1" fill="#b4b8bc" stroke="none"/>
<!-- render materials brush -->
<g stroke="#9a9ea2" stroke-width="1.2">
<path d="M784.6,70.8 H795.2 V76 C795.2,78 793.6,78.8 792,78.8 H787.8 C786.2,78.8 784.6,78 784.6,76 Z"/>
<path d="M787.4,71 v3.4 M789.9,71 v3.4 M792.4,71 v3.4 M789.9,79 V82.8"/>
</g>
<!-- materials brick -->
<g stroke="#a8acb0" stroke-width="1.2">
<rect x="780.6" y="96" width="17.8" height="17.2"/>
<path d="M780.6,100.4 H798.4 M780.6,104.6 H798.4 M780.6,108.8 H798.4 M789.4,96 V100.4 M785,100.4 V104.6 M793.8,100.4 V104.6 M789.4,104.6 V108.8 M785,108.8 V113.2 M793.8,108.8 V113.2"/>
</g>
<!-- visual-style column icons -->
<path d="M1008.8,78 L1013,86 H1025.4 V78.6" stroke="#8c9094" stroke-width="1.2"/>
<path d="M1012.4,78.6 L1014.4,69 H1018.6 L1020.6,74 L1016.4,80.6 Z" fill="#b0404c" stroke="none"/>
<path d="M1015.4,69.4 h2.6 v4.2 h-2.6 z" fill="#e8e8ea" stroke="none"/>
<path d="M1019.6,72.4 L1023.4,68.6" stroke="#4a9a8a" stroke-width="1.2"/>
<rect x="1017.4" y="78.4" width="7.6" height="7" fill="#3f62b0" stroke="none"/><path d="M1018.6,82.6 H1024" stroke="#9db7ee" stroke-width="1"/>
<path d="M1011.4,103.6 V100.2 C1011.4,96 1017.8,96 1017.8,100.2 L1024.6,107.8 L1020.4,113" stroke="#8c9094" stroke-width="1.2"/>
<rect x="1008.6" y="104.2" width="8.8" height="9.6" fill="#3f62b0" stroke="none"/><path d="M1009.8,109.6 H1016.2 M1010,106.6 l2.4,-1.6 l2.8,1.6" stroke="#9db7ee" stroke-width="1"/>
<path d="M1019.6,108 l3,-2.6 l2,2.4 l-3,2.8 z" fill="#8a7a68" stroke="none"/>
<g stroke="#85776a" stroke-width="1.1"><circle cx="1017.2" cy="131.8" r="5.2"/>
<path d="M1017.2,123.4 v1.4 M1017.2,138.8 v1.4 M1008.8,131.8 h1.4 M1024.2,131.8 h1.4 M1011.2,125.8 l1,1 M1022.2,136.8 l1,1 M1023.2,125.8 l-1,1 M1012.2,136.8 l-1,1"/>
<path d="M1014,129.4 l6.4,4.8 M1014,134.2 l6.4,-4.8" stroke-width=".8"/></g>
<!-- tile horizontally -->
<rect x="1041.4" y="69.2" width="18" height="8.4" stroke="#c8cacc" stroke-width="1.2" fill="#1c2434"/>
<rect x="1041" y="68.8" width="18.8" height="4" fill="#4a7fd8" stroke="none"/><path d="M1043,70.6 H1058" stroke="#a9c2f4" stroke-width=".8" stroke-dasharray="1 1"/>
<rect x="1041.4" y="80.2" width="18" height="7.4" stroke="#c8cacc" stroke-width="1.2" fill="#1c2434"/>
<rect x="1041" y="79.8" width="18.8" height="3.4" fill="#4a7fd8" stroke="none"/>
<!-- tile vertically -->
<rect x="1041.4" y="97" width="7" height="16.6" stroke="#c8cacc" stroke-width="1.2" fill="#1c2434"/>
<rect x="1041" y="96.6" width="7.8" height="4" fill="#4a7fd8" stroke="none"/>
<rect x="1052.6" y="97" width="7" height="16.6" stroke="#c8cacc" stroke-width="1.2" fill="#1c2434"/>
<rect x="1052.2" y="96.6" width="7.8" height="4" fill="#4a7fd8" stroke="none"/>
<!-- cascade -->
<g stroke="#8e98ac" stroke-width="1.2">
<path d="M1046.6,134 H1042 V124.6 H1054 V131.6 M1042,126.6 H1054"/>
<rect x="1047" y="132" width="12.4" height="9.4" fill="#2e3236"/><path d="M1047,134 H1059.4"/>
</g>
</g>

<g id="icons-side" fill="none" stroke-linecap="round" stroke-linejoin="round" stroke="#d4d6d8" stroke-width="1.3">
<!-- header -->
<circle cx="1813" cy="254.6" r="5.4"/><path d="M1809.4,258.8 L1805.6,263.4"/>
<g fill="#f2f3f4" stroke="none"><circle cx="1842" cy="251.2" r="1.6"/><circle cx="1842" cy="257" r="1.6"/><circle cx="1842" cy="262.7" r="1.6"/></g>
<path d="M1834,290.4 L1839.8,296 L1845.6,290.4" stroke="#e4e6e8" stroke-width="1.5"/>
<!-- toolbar -->
<circle cx="1489.8" cy="330.5" r="7.6"/><path d="M1485.6,330.5 H1494 M1489.8,326.3 V334.7"/>
<path d="M1511,336.8 V324.6 H1516.4 L1518,326.6 H1524.4 V329.2 M1511,336.8 L1514.6,329.2 H1527.6 L1524,336.8 Z"/>
<path d="M1536.2,329.2 h5 l-2.5,2.8 z M1576.4,329.2 h5 l-2.5,2.8 z M1789.6,328.6 h5 l-2.5,2.8 z" fill="#e8eaec" stroke="none"/>
<path d="M1555.4,327.4 V322.8 H1563 V327.4 M1559,336 H1552.6 C1551,336 1550.4,335.2 1550.4,334 V329.6 C1550.4,328.2 1551.2,327.4 1552.6,327.4 H1565.2 C1566.8,327.4 1567.4,328.2 1567.4,329.6 V331.4 M1555.4,339 V333 H1559.6"/>
<path d="M1559.6,336.4 H1567.4 M1564.6,333.2 L1567.8,336.4 L1564.6,339.6" stroke="#4c9c5c" stroke-width="1.4"/>
<rect x="1555.6" y="337.4" width="4" height="2" fill="#9fb3d8" stroke="none"/>
<path d="M1602,339.4 H1591.2 V326.4 L1593.8,322.8 H1603.2 L1605.6,326.4 V329 M1591.2,326.4 H1605.6 M1596.6,326.4 V330.6 L1598.4,329.4 L1600.2,330.6 V326.4"/>
<path d="M1599.6,333.4 H1608.4 M1605.4,330 L1608.8,333.4 L1605.4,336.8" stroke="#4c9c5c" stroke-width="1.4"/>
<!-- right tools -->
<rect x="1762.8" y="322.4" width="7" height="7" stroke-width="1.1"/><path d="M1764.8,326 h3" stroke-width="1"/>
<path d="M1766.3,329.4 V339" stroke-width="1" stroke-dasharray="1.2 1.4"/><path d="M1766.3,333.4 H1770 M1766.3,339 H1770" stroke-width="1"/>
<g fill="#e4e6e8" stroke="none"><rect x="1772" y="323.8" width="9" height="4.2" rx="1.4"/><rect x="1772" y="330.8" width="9" height="4.2" rx="1.4"/><rect x="1772" y="337" width="9" height="4.2" rx="1.4"/></g>
<path d="M1811,336.2 H1803.8 V322.4 H1818.4 V328.6" stroke-width="1.2"/>
<path d="M1806.4,325.8 H1815.6 M1806.4,329.2 H1813.6 M1806.4,332.6 H1811" stroke-width="1"/>
<path d="M1808.6,324.6 v2.4 M1812.6,328 v2.4 M1808.6,331.4 v2.4" stroke-width="1.1"/>
<circle cx="1816.8" cy="332.8" r="2.3" stroke-width="1.2"/><path d="M1812.4,340.4 C1813.2,336.4 1820.4,336.4 1821.2,340.4" stroke-width="1.2"/>
<path d="M1848.2,333.2 A6.4,6.4 0 1 1 1845.6,326.2" /><path d="M1850.4,326.4 L1849.6,331.4 L1845,329.6" stroke-width="1.2"/>
<!-- tree -->
<path d="M1469,410.2 H1482.6 M1475.8,403.4 V417" stroke="#4a86e8" stroke-width="1.2"/>
<path d="M1472.4,433.6 L1477.2,438.4 L1482,433.6" stroke="#e4e6e8" stroke-width="1.4"/>
<path d="M1492,441.2 V426.8 H1498 L1499.6,429.2 H1509.4 V441.2 Z M1492,431.6 H1509.4" stroke-width="1.2"/>
<rect x="1511.8" y="447.8" width="18.4" height="18.4" fill="#4a86e8" stroke="none" rx="1"/>
<path d="M1513.4,457 H1528.6 M1521,449.6 V464.4" stroke="#e8eefc" stroke-width="1.3"/><circle cx="1521" cy="457" r="2.8" stroke="#e8eefc" stroke-width="1" stroke-dasharray="1 1"/>
<!-- details chevron -->
<path d="M1841.4,988.4 L1847.4,982.6 L1853.4,988.4" stroke="#f2f3f4" stroke-width="1.5"/>
<!-- right strip -->
<g stroke="#d8dadc" stroke-width="1.3">
<path d="M1885.6,243.4 H1889.2 M1894.6,243.4 H1907.8 M1885.6,255 H1899 M1904.4,255 H1907.8"/><circle cx="1891.9" cy="243.4" r="2.6"/><circle cx="1901.7" cy="255" r="2.6"/>
<path d="M1886.4,297.6 L1894.6,290 H1907.4 L1899.2,297.6 Z M1886.4,302 L1888.4,303.6 H1899.2 L1907.4,296 M1886.4,307.4 L1888.4,309 H1899.2 L1907.4,301.4 M1888.6,301 l-2.2,1 l1.6,1.6 M1888.6,306.4 l-2.2,1 l1.6,1.6"/>
<path d="M1891.6,352 V342.8 C1891.6,336 1901.8,336 1901.8,342.8 V353.4 C1901.8,359.6 1894.4,359.6 1894.4,353.4 V344.6 C1894.4,341.4 1899,341.4 1899,344.6 V352"/>
<path d="M1887.4,403 C1887.4,401 1888.2,399.6 1889.4,397.6 L1894.6,389.6 C1896.2,387.2 1899.6,387.4 1901,389.6 C1902,391.2 1901.8,392.4 1901,393.8 L1895,404 C1893.8,406 1892.6,407.4 1890.8,407.4 C1888.8,407.4 1887.4,405.4 1887.4,403 Z M1890.8,407.4 H1907.6 V391.4 H1902.2 M1893.8,402.6 C1893.8,400.4 1890.2,400.6 1890.2,402.8 C1890.2,403.8 1891.2,404.6 1892,404.4 M1903.6,395.6 V404 H1897.4 Z"/>
<path d="M1897.4,487.2 H1886.6 V492.4 H1897.4 Z M1889.6,489.8 h4.8 M1892,492.4 V505 H1896.4 M1892,498.6 H1896.4 M1896.6,496 H1907.6 V501 H1896.6 Z M1896.6,502.6 H1907.6 V507.6 H1896.6 Z" stroke-width="1.2"/>
<circle cx="1896.8" cy="546.4" r="10.6"/><circle cx="1890.4" cy="546.4" r="1.4" fill="#d8dadc" stroke="none"/>
<path d="M1894.2,541.8 C1896.4,544.4 1896.4,548.4 1894.2,551 M1898.6,539.4 C1902,543.6 1902,549.4 1898.6,553.4"/>
<path d="M1891.4,604 H1902.8 C1908.6,604 1909.2,596.4 1903.8,595.4 C1903.6,586.6 1891.8,586.4 1890.6,594.4 C1885,594.8 1885,604 1891.4,604 Z"/>
<path d="M1893.8,597.6 H1899.4 L1897.8,596 M1899.8,600.4 H1894.2 L1895.8,602" stroke-width="1"/>
</g>
</g>

<g id="icons-status" fill="none" stroke-linecap="round" stroke-linejoin="round" stroke="#d0d2d4" stroke-width="1.2">
<!-- hamburger, model tab, plus -->
<path d="M12,1013.5 H26.2 M12,1018.2 H26.2 M12,1022.9 H26.2" stroke="#3f4347" stroke-width="1.2"/>
<rect x="47.2" y="1011.8" width="15.4" height="14" stroke-width="1.3"/>
<path d="M50,1015 V1023 H54.6 M57.6,1023 h2.4" stroke-width="1"/><circle cx="50" cy="1023" r="1" fill="#d0d2d4" stroke="none"/>
<path d="M211.6,1018.4 H226.2 M218.9,1011.4 V1025.6" stroke="#e4e6e8" stroke-width="1.4"/>
<!-- command line -->
<path d="M199.4,978 V992.6" stroke="#8a8e92" stroke-width="1.4" stroke-dasharray="1.6 2"/>
<path d="M1246.2,986 L1250.6,981.4 L1255,986 Z" fill="#e4e6e8" stroke="none"/>
<!-- globe -->
<circle cx="831.4" cy="1018.4" r="8.2"/><ellipse cx="831.4" cy="1018.4" rx="3.6" ry="8.2"/><path d="M831.4,1010.2 V1026.6 M823.4,1018.4 H839.4 M824.8,1014 H838 M824.8,1022.8 H838" stroke-width="1"/>
<!-- scale axes icon -->
<g stroke="#4a86e8" stroke-width="1.3"><path d="M894.2,1021 V1012 M894.2,1021 L887.6,1026.4 M894.2,1021 L900.8,1026.4 M891,1014.6 L894.2,1011.2 L897.4,1014.6 M886.6,1022.6 L886.6,1027.2 L891.4,1027.2 M902,1022.6 L902,1027.2 L897.2,1027.2"/></g>
<!-- dashed square -->
<g stroke="#474b4f" stroke-width="1.2"><path d="M938.4,1014.4 V1011.4 H941.4 M950,1011.4 H953 V1014.4 M953,1023.6 V1026.6 H950"/><rect x="938.6" y="1017.6" width="8.6" height="8.6"/></g>
<!-- grid -->
<g stroke="#e4e6e8" stroke-width="1.2"><path d="M970.6,1011 V1026 M974.6,1011 V1026 M978.6,1011 V1026 M967.4,1014.4 H981.8 M967.4,1018.4 H981.8 M967.4,1022.4 H981.8"/></g>
<!-- snap -->
<g stroke="#5f6368" stroke-width="1.2"><path d="M1031.6,1011 V1026 M1035.6,1011 V1026 M1039.6,1011 V1026 M1028.6,1014.4 H1042.6 M1028.6,1018.4 H1042.6 M1028.6,1022.4 H1042.6"/></g>
<g fill="#e0566a" stroke="none"><circle cx="1035.6" cy="1018.4" r="1.5"/><circle cx="1035.6" cy="1014.4" r="1"/><circle cx="1035.6" cy="1022.4" r="1"/><circle cx="1031.6" cy="1018.4" r="1"/><circle cx="1039.6" cy="1018.4" r="1"/></g>
<!-- ortho -->
<path d="M1096.4,1011.4 V1025.6" stroke="#4f9a62" stroke-width="1.3"/>
<path d="M1099.6,1016.6 V1024.4 H1104.6 V1019.8 H1099.6" stroke="#e4e6e8" stroke-width="1.2"/>
<path d="M1097.4,1026.4 H1108.4" stroke="#d0505c" stroke-width="1.2" stroke-dasharray="1.2 1.4"/>
<!-- strack -->
<path d="M1171.6,1023.6 L1184.2,1011" stroke="#a8acb0" stroke-width="1.3"/><circle cx="1171.4" cy="1024.2" r="1.8" fill="#d8585a" stroke="none"/>
<path d="M1173.6,1025.4 H1184.6" stroke="#d8585a" stroke-width="1.2" stroke-dasharray="1.2 1.3"/>
<!-- esnap magnet -->
<path d="M1254.6,1022 V1017.6 C1254.6,1010.4 1264.8,1010.4 1264.8,1017.6 V1022" stroke="#d4686c" stroke-width="3.6" stroke-linecap="butt"/>
<path d="M1254.6,1022 V1017.6 C1254.6,1010.4 1264.8,1010.4 1264.8,1017.6 V1022" stroke="#8c2f38" stroke-width="1" stroke-dasharray="1 1.4"/>
<g fill="#1e2a45" stroke="#ececee" stroke-width="1.1"><rect x="1252.6" y="1022.6" width="4" height="4"/><rect x="1262.8" y="1022.6" width="4" height="4"/></g>
<!-- ducs -->
<path d="M1327,1024.4 V1012.6 M1327,1024.4 H1338.4 M1324.6,1015 L1327,1012.2 L1329.4,1015 M1336,1022 L1338.8,1024.4 L1336,1026.8" stroke="#e4e6e8" stroke-width="1.2"/>
<path d="M1334.4,1011.8 L1331.4,1016.8 H1335 L1332.6,1021" stroke="#e08a5a" stroke-width="1.2"/>
<!-- dyn -->
<path d="M1390.4,1015 H1395.2 M1392.8,1012.6 V1017.4" stroke="#e4e6e8" stroke-width="1.1"/>
<rect x="1391.2" y="1019.8" width="14.6" height="6" rx="1" stroke="#e4e6e8" stroke-width="1.2"/><path d="M1393.6,1022.8 H1400" stroke="#e4e6e8" stroke-width="1"/>
<!-- quad -->
<path d="M1447.6,1011.8 H1452.4 M1450,1009.4 V1014.2" stroke-width="1.1"/>
<rect x="1453.6" y="1014.2" width="11.4" height="11.6" stroke-width="1.2"/><path d="M1453.6,1016.8 H1465" stroke-width="1.6"/>
<g fill="#d0d2d4" stroke="none"><rect x="1455.4" y="1018.8" width="1.8" height="1.8"/><rect x="1458.4" y="1018.8" width="1.8" height="1.8"/><rect x="1461.4" y="1018.8" width="1.8" height="1.8"/><rect x="1455.4" y="1022" width="1.8" height="1.8"/><rect x="1458.4" y="1022" width="1.8" height="1.8"/></g>
<!-- RT -->
<path d="M1514.4,1010.2 H1519 M1516.7,1008 V1012.4" stroke-width="1"/>
<rect x="1520.8" y="1013" width="19.2" height="16.6" stroke-width="1.3"/><path d="M1520.8,1017.2 H1540" stroke-width="1.3"/>
<path d="M1524.4,1021.4 H1529.6 M1532.6,1021.4 H1537 M1524.4,1025.4 H1529.6 M1532.6,1025.4 H1537" stroke-width="1.2"/>
<!-- hide bulb -->
<path d="M1576.6,1023 C1572.4,1020 1573.4,1012.2 1579.2,1012.2 C1585,1012.2 1586,1020 1581.8,1023 V1025.2 H1576.6 Z M1577.4,1027.2 H1581" stroke-width="1.2"/>
<path d="M1577.8,1017.4 l1.4,1.6 l1.4,-1.6 M1579.2,1019 V1023" stroke-width=".9"/>
<!-- HKA -->
<rect x="1632.4" y="1013.6" width="16.8" height="10" rx="1.6" stroke-width="1.3"/>
<!-- lock ui -->
<path d="M1700,1027 H1692 V1011.4 H1707.6 V1018.6 M1692,1015.4 H1707.6 M1696.4,1015.4 V1027" stroke-width="1.2"/>
<path d="M1694.6,1013.4 h.8 M1697.4,1013.4 h.8 M1700.2,1013.4 h.8" stroke-width="1.2"/>
<rect x="1701.4" y="1022.4" width="7" height="5" rx=".8" stroke-width="1.2"/><path d="M1703,1022.4 V1021 C1703,1018.8 1706.8,1018.8 1706.8,1021 V1022.4" stroke-width="1.1"/>
<!-- modeling workspace icon -->
<rect x="1721.4" y="1011.4" width="15.2" height="15.2" rx="1" stroke-width="1.2"/><path d="M1721.4,1015.6 H1736.6 M1725.6,1015.6 V1026.6" stroke-width="1.2"/>
<path d="M1724,1013.5 h.8 M1726.8,1013.5 h.8 M1729.6,1013.5 h.8" stroke-width="1.2"/>
<path d="M1805.4,1017 L1809,1020.6 L1812.6,1017" stroke="#7a7e82" stroke-width="1.2"/>
<!-- printer -->
<rect x="1838" y="1022.6" width="9.2" height="4.6" fill="#5a7fe0" stroke="none"/>
<path d="M1838.4,1016 V1011.4 H1846.8 V1016 M1838,1024.6 H1836 C1834.4,1024.6 1833.8,1023.8 1833.8,1022.4 V1018.2 C1833.8,1016.8 1834.6,1016 1836,1016 H1849 C1850.4,1016 1851,1016.8 1851,1018.2 V1022.4 C1851,1023.8 1850.4,1024.6 1849,1024.6 H1847.2 M1838,1027.4 V1021.4 H1847.2 V1027.4" stroke-width="1.3"/>
<!-- bell -->
<path d="M1866,1023.6 C1868,1021.6 1867,1018.6 1867.6,1016 C1868.4,1012.4 1870.2,1011.4 1871.6,1011.4 C1873,1011.4 1874.8,1012.4 1875.6,1016 C1876.2,1018.6 1875.2,1021.6 1877.2,1023.6 Z M1870.4,1025.6 C1870.8,1026.8 1872.4,1026.8 1872.8,1025.6" stroke="#474b4f" stroke-width="1.2"/>
<g fill="#f2f3f4" stroke="none"><circle cx="1900.5" cy="1013.7" r="1.7"/><circle cx="1900.5" cy="1019.3" r="1.7"/><circle cx="1900.5" cy="1024.7" r="1.7"/></g>
</g>

</svg>
</body></html>
